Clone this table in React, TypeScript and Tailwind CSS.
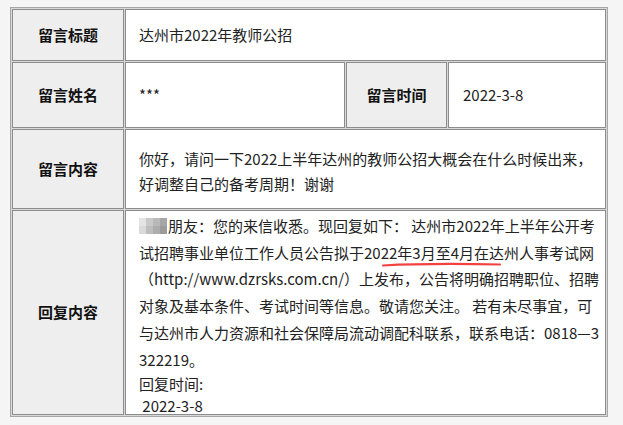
import React from 'react';

const labelCls =
  'shrink-0 border border-[#8c8c8c] bg-[#eeeeee] flex items-center justify-center font-bold text-[15px] text-[#111]';
const valueCls = 'min-w-0 border border-[#8c8c8c] bg-white flex items-center px-[13px] text-[15px] text-[#222]';

// pixelated name, as in the source screenshot
const Mosaic: React.FC = () => {
  const shades = [
    ['#e4e4e4', '#c9c9c9', '#b9b9b9', '#a6a6a6'],
    ['#dadada', '#bdbdbd', '#acacac', '#9b9b9b'],
  ];
  return (
    <span className="inline-flex flex-col align-middle mr-[1px] blur-[0.6px] -mt-[3px]">
      {shades.map((row, i) => (
        <span key={i} className="flex">
          {row.map((c, j) => (
            <span key={j} className="w-[7px] h-[8px]" style={{ backgroundColor: c }} />
          ))}
        </span>
      ))}
    </span>
  );
};

export default function App() {
  const replyLines = [
    '试招聘事业单位工作人员公告拟于2022年3月至4月在达州人事考试网',
    '（http://www.dzrsks.com.cn/）上发布，公告将明确招聘职位、招聘',
    '对象及基本条件、考试时间等信息。敬请您关注。 若有未尽事宜，可',
    '与达州市人力资源和社会保障局流动调配科联系，联系电话：0818—3',
    '322219。',
  ];

  return (
    <div className="w-[623px] h-[425px] bg-[#f5f5f5] pt-[7px] pl-[10px] font-['Microsoft_YaHei','Noto_Sans_CJK_SC',sans-serif]">
      <div className="w-[598px] border border-[#a6a6a6] bg-[#d9d9d9] p-px flex flex-col gap-px">
        {/* title */}
        <div className="flex gap-px h-[52px]">
          <div className={`${labelCls} w-[112px]`}>留言标题</div>
          <div className={`${valueCls} flex-1`}>达州市2022年教师公招</div>
        </div>

        {/* name + time */}
        <div className="flex gap-px h-[66px]">
          <div className={`${labelCls} w-[112px]`}>留言姓名</div>
          <div className={`${valueCls} w-[220px] shrink-0`}>***</div>
          <div className={`${labelCls} w-[101px]`}>留言时间</div>
          <div className={`${valueCls} flex-1 pl-[14px]`}>2022-3-8</div>
        </div>

        {/* message */}
        <div className="flex gap-px h-[80px]">
          <div className={`${labelCls} w-[112px]`}>留言内容</div>
          <div className={`${valueCls} flex-1 pt-[3px]`}>
            <p className="leading-[25px] whitespace-nowrap">
              你好，请问一下2022上半年达州的教师公招大概会在什么时候出来，
              <br />
              好调整自己的备考周期！谢谢
            </p>
          </div>
        </div>

        {/* reply */}
        <div className="flex gap-px h-[205px]">
          <div className={`${labelCls} w-[112px]`}>回复内容</div>
          <div className="relative min-w-0 flex-1 border border-[#8c8c8c] bg-white px-[13px] pt-[2px] text-[15px] text-[#222]">
            <div className="leading-[26.7px] whitespace-nowrap">
              <div>
                <Mosaic />
                朋友：您的来信收悉。现回复如下： 达州市2022年上半年公开考
              </div>
              {replyLines.map((l, i) => (
                <div key={i}>{l}</div>
              ))}
            </div>
            <div className="leading-[22px] whitespace-pre">回复时间:</div>
            <div className="leading-[22px] whitespace-pre"> 2022-3-8</div>

            {/* red hand-drawn underline */}
            <svg
              className="absolute left-[255px] top-[50px] pointer-events-none"
              width="122"
              height="7"
              viewBox="0 0 122 7"
            >
              <path
                d="M2 4.5 C 30 3, 70 2.5, 119 3.5"
                fill="none"
                stroke="#f2413f"
                strokeWidth="2.2"
                strokeLinecap="round"
              />
            </svg>
          </div>
        </div>
      </div>
    </div>
  );
}
